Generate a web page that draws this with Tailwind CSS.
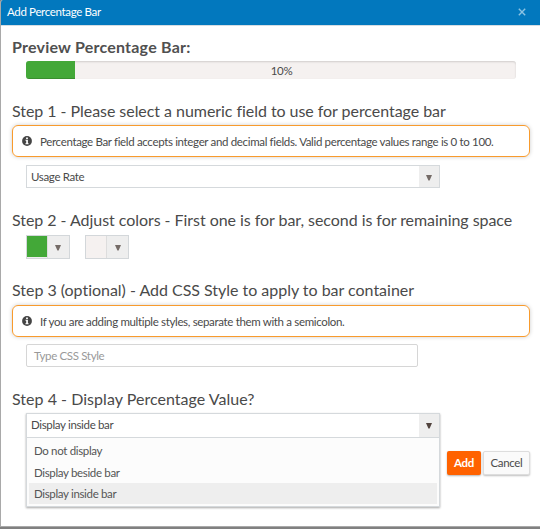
<!DOCTYPE html>
<html lang="en">
<head>
<meta charset="utf-8">
<title>Add Percentage Bar</title>
<script src="https://cdn.jsdelivr.net/npm/@tailwindcss/browser@4"></script>
</head>
<body class="bg-[#808080] overflow-hidden">
<div class="w-[540px] h-[527px] flex flex-col bg-white border-l border-b border-[#a9a9a9] rounded-tl-[3px] font-[Lato,sans-serif] text-[11.5px] leading-[16px] tracking-[-0.34px] text-[#4a4a4a] whitespace-nowrap overflow-hidden">
  <header class="h-[26px] shrink-0 bg-[#0278be] border-b border-[#d5dde3] flex items-center justify-between pl-[6px] pr-[14px] text-white">
    <h1 class="relative -top-px">Add Percentage Bar</h1>
    <svg class="relative -top-px w-2 h-2" viewBox="0 0 8 8" stroke="#8cc3e3" stroke-width="1.4"><path d="M.8 .8 7.2 7.2M7.2 .8.8 7.2"/></svg>
  </header>
  <main class="flex flex-col pl-[11px] pr-[10px] pt-[11px]">
    <h2 class="h-6 leading-[20px] text-[16px] tracking-[0.22px] font-bold text-[#505050]">Preview Percentage Bar:</h2>
    <div class="relative ml-[14px] w-[490px] h-[18px] rounded-[3px] bg-[#f5f1f0] overflow-hidden shadow-[inset_0_1px_2px_rgba(0,0,0,0.15)] flex">
      <div class="w-[49px] h-full bg-[#43a838] shadow-[inset_0_-1px_0_rgba(0,0,0,0.15)]"></div>
      <span class="absolute inset-0 text-center leading-[20px] pl-[21px]">10%</span>
    </div>
    <h2 class="mt-5 h-6 leading-6 text-[16px] tracking-[-0.05px]">Step 1 - Please select a numeric field to use for percentage bar</h2>
    <div class="mt-[2px] h-8 w-[518px] rounded-[6px] border border-[#f89b2d] shadow-[0_0_4px_rgba(0,0,0,0.2)] flex items-center pl-[9px] gap-[8px]">
      <svg class="shrink-0 w-[10px] h-[10px]" viewBox="0 0 10 10"><circle cx="5" cy="5" r="4.9" fill="#444"/><path fill="#fff" d="M4.1 1.5h1.8v1.4H4.1zM3.5 3.8h2.4v3.4h.7v1H3.4v-1h.8V4.8h-.7z"/></svg>
      <span class="pt-[2px]">Percentage Bar field accepts integer and decimal fields. Valid percentage values range is 0 to 100.</span>
    </div>
    <div class="mt-2 ml-[14px] w-[414px] h-[23px] border border-[#d5d9dc] flex">
      <span class="flex-1 pl-1 leading-[22px]">Usage Rate</span>
      <span class="w-5 bg-[#eee] flex items-center justify-center"><svg class="w-[6px] h-[6px] mt-[2px]" viewBox="0 0 6 6"><path d="M0 0h6L3.6 5.5H2.4z" fill="#746b67"/></svg></span>
    </div>
    <h2 class="mt-5 h-6 leading-6 text-[16px] tracking-[-0.05px]">Step 2 - Adjust colors - First one is for bar, second is for remaining space</h2>
    <div class="mt-[3px] ml-[14px] flex gap-[15px]">
      <div class="w-11 h-6 border border-[#d3d7da] bg-[#eee] flex">
        <span class="w-5 h-[21px] bg-[#43a838]"></span>
        <span class="flex-1 border-l border-[#ddd] flex items-center justify-center"><svg class="w-[6px] h-[6px] mr-[2px] mt-[2px]" viewBox="0 0 6 6"><path d="M0 0h6L3.6 5.5H2.4z" fill="#746b67"/></svg></span>
      </div>
      <div class="w-11 h-6 border border-[#d3d7da] bg-[#eee] flex">
        <span class="w-5 h-[22px] bg-[#f5f1f0]"></span>
        <span class="flex-1 border-l border-[#ddd] flex items-center justify-center"><svg class="w-[6px] h-[6px] mt-[2px]" viewBox="0 0 6 6"><path d="M0 0h6L3.6 5.5H2.4z" fill="#746b67"/></svg></span>
      </div>
    </div>
    <h2 class="mt-[19px] h-6 leading-6 text-[16px] tracking-[-0.02px]">Step 3 (optional) - Add CSS Style to apply to bar container</h2>
    <div class="mt-[3px] h-8 w-[518px] rounded-[6px] border border-[#f89b2d] shadow-[0_0_4px_rgba(0,0,0,0.2)] flex items-center pl-[9px] gap-[8px]">
      <svg class="shrink-0 w-[10px] h-[10px]" viewBox="0 0 10 10"><circle cx="5" cy="5" r="4.9" fill="#444"/><path fill="#fff" d="M4.1 1.5h1.8v1.4H4.1zM3.5 3.8h2.4v3.4h.7v1H3.4v-1h.8V4.8h-.7z"/></svg>
      <span class="pt-[2px]">If you are adding multiple styles, separate them with a semicolon.</span>
    </div>
    <div class="mt-[7px] ml-[14px] w-[392px] h-[23px] rounded-[2px] border border-[#d6d6d6] pl-[7px] leading-[22px] text-[#999]">Type CSS Style</div>
    <h2 class="mt-5 h-6 leading-6 text-[16px] tracking-[0.03px]">Step 4 - Display Percentage Value?</h2>
    <div class="mt-[2px] ml-[14px] flex">
      <div class="w-[414px] h-[94px] border border-[#d5d9dc] bg-[#fcfcfc] shadow-[0_1px_2px_rgba(0,0,0,0.35)] flex flex-col">
        <div class="h-[24px] border-b border-[#d5d9dc] bg-white flex">
          <span class="flex-1 pl-1 leading-[22px]">Display inside bar</span>
          <span class="w-5 bg-[#eee] flex items-center justify-center"><svg class="w-[6px] h-[6px]" viewBox="0 0 6 6"><path d="M0 0h6L3.6 5.5H2.4z" fill="#51433e"/></svg></span>
        </div>
        <ul class="px-[2px] pt-[2px] leading-[22px] text-[#555]">
          <li class="pl-[5px] h-[22px]">Do not display</li>
          <li class="pl-[5px] h-[21px]">Display beside bar</li>
          <li class="pl-[5px] h-[21px] bg-[#eee]">Display inside bar</li>
        </ul>
      </div>
      <div class="mt-[38px] ml-[7px] h-6 flex gap-[2px] leading-6 text-center">
        <button class="w-[34px] rounded-[2px] bg-[#ff6200] text-white font-bold tracking-[-0.34px] shadow-[0_1px_2px_rgba(0,0,0,0.3)]">Add</button>
        <button class="w-[47px] rounded-[2px] border border-[#ddd] bg-[#fafafa] leading-[22px] tracking-[-0.34px] shadow-[0_1px_2px_rgba(0,0,0,0.25)]">Cancel</button>
      </div>
    </div>
  </main>
</div>
</body>
</html>
